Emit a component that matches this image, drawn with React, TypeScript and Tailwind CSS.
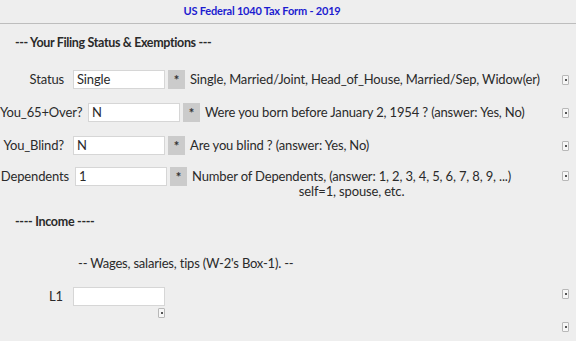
const rows = [
  { label: "Status", value: "Single", labelW: "w-[64px]", gap: "gap-[9px]", desc: "Single, Married/Joint, Head_of_House, Married/Sep, Widow(er)" },
  { label: "You_65+Over?", value: "N", labelW: "w-[82px]", gap: "gap-[6px]", desc: "Were you born before January 2, 1954 ? (answer: Yes, No)" },
  { label: "You_Blind?", value: "N", labelW: "w-[64px]", gap: "gap-[9px]", desc: "Are you blind ? (answer: Yes, No)" },
];

function Tiny() {
  return (
    <div className="w-[7px] h-[10px] border border-[#b8b8b8] bg-[#f6f6f6] rounded-[1px] flex items-center justify-center">
      <div className="w-[2px] h-[2px] bg-[#555]" />
    </div>
  );
}

function Field({ value }: { value: string }) {
  return (
    <div className="w-[92px] h-[19px] shrink-0 bg-white border border-[#d6d6d6] flex items-center px-[3px] text-[13px]">
      {value}
    </div>
  );
}

function Star() {
  return (
    <div className="w-[17px] h-[19px] shrink-0 bg-[#cbcbcb] flex items-center justify-center text-[13px] font-bold text-[#333] pt-[2px]">*</div>
  );
}

export default function App() {
  return (
    <div className="w-[576px] h-[341px] overflow-hidden bg-[#eeeeee] text-[13px] tracking-[-0.15px] text-[#2a2a2a] font-['Lato','Open_Sans',sans-serif]">
      <div className="h-[24px] border-b border-[#bdbdbd] flex items-center justify-center pr-[52px] text-[11px] font-bold tracking-[-0.2px] text-[#1c1cd0]">
        US Federal 1040 Tax Form - 2019
      </div>

      <div className="h-[39px] flex items-center pl-[15px] font-bold text-[12.5px] tracking-[-0.35px]">--- Your Filing Status &amp; Exemptions ---</div>

      {rows.map((r) => (
        <div key={r.label} className="h-[33px] flex items-center justify-between pr-[7px]">
          <div className={`flex items-center ${r.gap}`}>
            <div className={`${r.labelW} text-right`}>{r.label}</div>
            <div className="flex items-center gap-[3px]">
              <Field value={r.value} />
              <Star />
              <span className="ml-[2px]">{r.desc}</span>
            </div>
          </div>
          <Tiny />
        </div>
      ))}

      <div className="h-[33px] flex items-start justify-between pr-[7px] pt-[5px]">
        <div className="flex items-start gap-[6px]">
          <div className="w-[69px] h-[19px] flex items-center justify-end">Dependents</div>
          <div className="flex items-start gap-[3px]">
            <Field value="1" />
            <Star />
            <div className="ml-[2px] text-center leading-[15px] pt-[2px]">
              Number of Dependents, (answer: 1, 2, 3, 4, 5, 6, 7, 8, 9, ...)
              <br />
              self=1, spouse, etc.
            </div>
          </div>
        </div>
        <div className="pt-[4px]">
          <Tiny />
        </div>
      </div>

      <div className="mt-[19px] h-[16px] leading-[16px] pl-[15px] font-bold text-[12.5px] tracking-[-0.3px]">---- Income ----</div>

      <div className="mt-[25px] h-[16px] leading-[16px] pl-[78px] tracking-[-0.2px]">-- Wages, salaries, tips (W-2's Box-1). --</div>

      <div className="mt-[16px] flex items-start justify-between pr-[7px]">
        <div className="flex items-start gap-[10px]">
          <div className="w-[63px] h-[19px] flex items-center justify-end">L1</div>
          <div className="flex flex-col items-end gap-[2px]">
            <Field value="" />
            <Tiny />
          </div>
        </div>
        <div className="flex flex-col gap-[23px] pt-[2px]">
          <Tiny />
          <Tiny />
        </div>
      </div>
    </div>
  );
}
